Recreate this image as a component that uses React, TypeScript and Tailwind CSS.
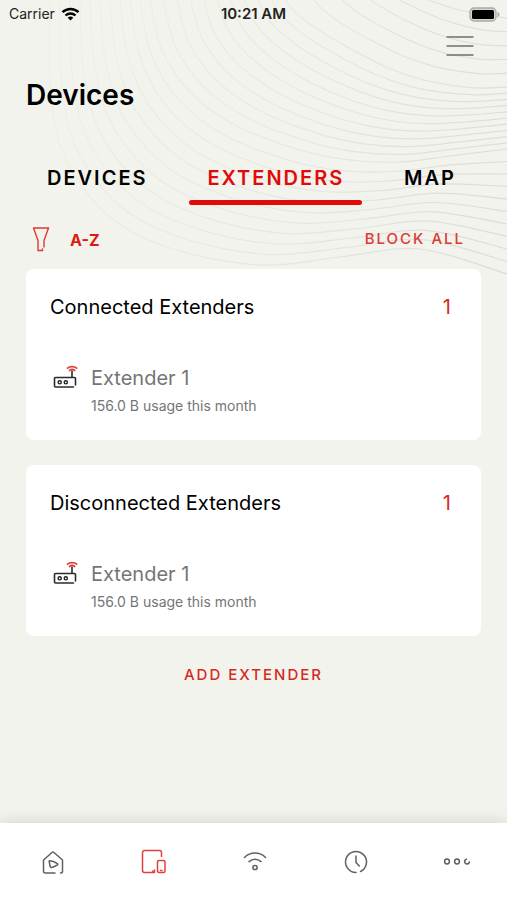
import React from "react";

type Point = [number, number];

const KEY_CURVES: { points: Point[]; steps: number }[] = [
  { points: [[428, 0], [440, 4], [452, 8], [463, 11], [474, 13], [485, 15], [491, 16], [499, 17], [507, 18]], steps: 5 },
  { points: [[285, 0], [296, 13], [320, 31], [353, 50], [386, 67], [420, 79], [450, 85], [478, 88], [507, 87]], steps: 10 },
  { points: [[150, 0], [162, 50], [190, 92], [235, 125], [300, 150], [350, 160], [400, 162], [450, 156], [507, 149]], steps: 10 },
  { points: [[50, 0], [50, 80], [62, 150], [105, 213], [170, 248], [260, 265], [340, 257], [420, 249], [507, 274]], steps: 0 },
];

function smoothPath(points: Point[]): string {
  let d = `M${points[0][0]} ${points[0][1]}`;
  for (let i = 0; i < points.length - 1; i++) {
    const p0 = points[Math.max(i - 1, 0)];
    const p1 = points[i];
    const p2 = points[i + 1];
    const p3 = points[Math.min(i + 2, points.length - 1)];
    d += ` C${p1[0] + (p2[0] - p0[0]) / 6} ${p1[1] + (p2[1] - p0[1]) / 6} ${p2[0] - (p3[0] - p1[0]) / 6} ${p2[1] - (p3[1] - p1[1]) / 6} ${p2[0]} ${p2[1]}`;
  }
  return d;
}

function contourPaths(): string[] {
  const paths: string[] = [];
  KEY_CURVES.forEach((curve, index) => {
    const next = KEY_CURVES[index + 1];
    if (!next) {
      paths.push(smoothPath(curve.points));
      return;
    }
    for (let s = 0; s < curve.steps; s++) {
      const t = s / curve.steps;
      paths.push(
        smoothPath(
          curve.points.map((p, i): Point => [
            p[0] + (next.points[i][0] - p[0]) * t,
            p[1] + (next.points[i][1] - p[1]) * t,
          ]),
        ),
      );
    }
  });
  return paths;
}

function Contours() {
  return (
    <svg className="pointer-events-none absolute inset-x-0 top-0 w-full" viewBox="0 0 507 290" fill="none" aria-hidden="true">
      <defs>
        <linearGradient id="contour" gradientUnits="userSpaceOnUse" x1="40" y1="0" x2="507" y2="160">
          <stop offset="0" stopColor="#eeefe9" />
          <stop offset="0.5" stopColor="#e8e9e3" />
          <stop offset="1" stopColor="#dcddd8" />
        </linearGradient>
      </defs>
      {contourPaths().map((d) => (
        <path key={d} d={d} stroke="url(#contour)" strokeWidth="1.2" />
      ))}
    </svg>
  );
}

function StatusBar() {
  return (
    <div className="grid h-7 grid-cols-3 items-center px-[9px] text-[14px] leading-5 text-[#222]">
      <div className="flex items-center gap-1.5">
        <span>Carrier</span>
        <svg width="19" height="14" viewBox="0 0 18 14" fill="none" stroke="#000" strokeWidth="2.4" aria-hidden="true">
          <path d="M1 5.2C5.5.9 12.500.9 17 5.200" />
          <path d="M4 8.500C6.800 5.800 11.200 5.800 14 8.500" />
          <path d="M6.200 10.700C7.800 9.200 10.200 9.200 11.800 10.700L9 13.500Z" fill="#000" stroke="none" />
        </svg>
      </div>
      <span className="text-center text-[15px] font-semibold">10:21 AM</span>
      <svg className="-mr-0.5 justify-self-end" width="31" height="15" viewBox="0 0 31 15" aria-hidden="true">
        <rect x="1" y="1" width="26" height="13" rx="4" fill="#d6d7d2" stroke="#aaaba7" strokeWidth="1.3" />
        <rect x="3" y="3" width="22" height="9" rx="1.500" fill="#000" />
        <path d="M28.500 5v5c1.400-.5 2-1.500 2-2.500s-.6-2-2-2.500Z" fill="#aaaba7" />
      </svg>
    </div>
  );
}

function ExtenderIcon() {
  return (
    <svg width="26" height="24" viewBox="0 0 26 24" fill="none" aria-hidden="true">
      <path d="M20.500 22H2.500a1 1 0 0 1-1-1v-7.500a1 1 0 0 1 1-1h19a1 1 0 0 1 1 1V20M19 12.500V6" stroke="#2b2b2b" strokeWidth="1.600" strokeLinecap="round" />
      <circle cx="6.700" cy="17.300" r="1.600" stroke="#222" strokeWidth="1.400" />
      <circle cx="12.800" cy="17.300" r="1.600" stroke="#222" strokeWidth="1.400" />
      <path d="M14.500 3.200C17 1 21.200 1 23.700 3.200M16.500 5.500C18 4.200 20.200 4.200 21.700 5.500" stroke="#e2403c" strokeWidth="1.700" strokeLinecap="round" />
    </svg>
  );
}

function ExtenderCard({ title, count }: { title: string; count: number }) {
  return (
    <section className="rounded-lg bg-white px-6 pt-6 pb-6">
      <div className="flex items-center justify-between pr-1.5">
        <h2 className="text-[20px] leading-7 text-black">{title}</h2>
        <span className="text-[20px] leading-7 text-[#d52b1e]">{count}</span>
      </div>
      <div className="mt-11 flex gap-3 pl-[3px]">
        <ExtenderIcon />
        <div className="-mt-px">
          <h3 className="text-[20px] leading-7 text-[#747676]">Extender 1</h3>
          <p className="mt-1 text-[14px] leading-5 text-[#747676]">156.0 B usage this month</p>
        </div>
      </div>
    </section>
  );
}

const TABS = ["DEVICES", "EXTENDERS", "MAP"];

const NAV_ITEMS: { label: string; active?: boolean; icon: React.ReactNode }[] = [
  {
    label: "Home",
    icon: (
      <>
        <path d="M16 25H6.500a2 2 0 0 1-2-2V12L13.300 4.300a1 1 0 0 1 1.400 0L23.500 12v11.500c0 .8-.7 1.500-2 1.500" />
        <path d="M10.500 12.800c2.700 0 5.300.9 7.900 2.800.5.4.5.9 0 1.300-1.900 1.400-3.800 2.200-5.900 2.600-.8.1-1.200-.2-1.300-1l-.9-4.500c-.1-.7-.3-1.200.2-1.200Z" />
      </>
    ),
  },
  {
    label: "Devices",
    active: true,
    icon: (
      <>
        <path d="M21.500 8.500V4.500a2 2 0 0 0-2-2h-15a2 2 0 0 0-2 2v18a2 2 0 0 0 2 2h10v-2.500M12.800 24.500v-1.500" />
        <rect x="17.500" y="12.500" width="7.500" height="12" rx="1.500" />
        <path d="M20.500 22.500h1.500" />
      </>
    ),
  },
  {
    label: "Network",
    icon: (
      <>
        <path d="M3.500 9.500C9.300 3.600 18.700 3.600 24.500 9.500M8 13.600c3.500-3.200 8.500-3.200 12 0" />
        <circle cx="14" cy="19.500" r="2.100" />
      </>
    ),
  },
  {
    label: "History",
    icon: (
      <>
        <path d="M14 24.500A10.500 10.500 0 1 1 18.500 23.500" />
        <path d="M14 8v6.500l3.300 3.500" />
      </>
    ),
  },
  {
    label: "More",
    icon: (
      <>
        <circle cx="4" cy="13.500" r="2.400" />
        <circle cx="14" cy="13.500" r="2.400" />
        <path d="M23.500 11.200a2.400 2.400 0 1 0 2.900 2.800" />
      </>
    ),
  },
];

export default function App() {
  return (
    <div className="relative flex min-h-screen flex-col bg-[#f2f3ed] font-['Inter','Liberation_Sans',sans-serif]">
      <Contours />
      <div className="relative flex flex-1 flex-col">
        <StatusBar />
        <header className="px-[26px]">
          <div className="flex justify-end pr-[3px]">
            <button type="button" aria-label="Menu" className="flex h-9 w-9 items-center justify-center">
              <svg width="28" height="20" viewBox="0 0 28 20" stroke="#6f706d" strokeWidth="1.500" aria-hidden="true">
                <path d="M.5 1h27M.5 10h27M.5 19h27" />
              </svg>
            </button>
          </div>
          <h1 className="mt-[11px] text-[28px] leading-10 font-semibold text-black">Devices</h1>
        </header>

        <div role="tablist" className="mt-[47px] flex justify-between pr-[33px] pl-[29px]">
          {TABS.map((tab) => {
            const active = tab === "EXTENDERS";
            return (
              <button
                key={tab}
                type="button"
                role="tab"
                aria-selected={active}
                className={
                  active
                    ? "flex flex-col text-[20px] leading-8 font-semibold tracking-widest text-[#e10a0a]"
                    : "flex flex-col text-[20px] leading-8 font-semibold tracking-widest text-black"
                }
              >
                <span className="px-[18px]">{tab}</span>
                <span className={active ? "mt-1.5 h-[5px] w-full rounded-sm bg-[#e10a0a]" : "mt-1.5 h-[5px] w-full"} />
              </button>
            );
          })}
        </div>

        <div className="flex h-16 items-center justify-between pr-[42px] pl-8">
          <div className="flex items-center gap-5 pt-1">
            <button type="button" aria-label="Filter">
              <svg width="18" height="26" viewBox="0 0 18 26" fill="none" stroke="#dc3b33" strokeWidth="1.400" strokeLinecap="round" strokeLinejoin="round" aria-hidden="true">
                <path d="M12 21V14.500L16.500 2H1.500L6 14.500V24.500H10.500V23" />
              </svg>
            </button>
            <button type="button" className="pt-0.5 text-[16px] leading-6 font-bold text-[#dc1a12]">
              A-Z
            </button>
          </div>
          <button type="button" className="pt-1 text-[15px] leading-6 font-medium tracking-[2px] text-[#dc3b33]">
            BLOCK ALL
          </button>
        </div>

        <main className="flex flex-1 flex-col gap-[25px] px-[26px]">
          <ExtenderCard title="Connected Extenders" count={1} />
          <ExtenderCard title="Disconnected Extenders" count={1} />
          <button type="button" className="self-center text-[15px] leading-7 font-medium tracking-[2px] text-[#d52b1e]">
            ADD EXTENDER
          </button>
        </main>
      </div>

      <nav className="relative grid h-[77px] grid-cols-5 bg-white pl-0.5 shadow-[0_-3px_12px_rgba(0,0,0,0.1)]">
        {NAV_ITEMS.map((item) => (
          <button
            key={item.label}
            type="button"
            aria-label={item.label}
            className={item.active ? "flex items-center justify-center text-[#e0403c]" : "flex items-center justify-center text-[#5f6061]"}
          >
            <svg width="28" height="28" viewBox="0 0 28 28" fill="none" stroke="currentColor" strokeWidth="1.500" strokeLinecap="round" strokeLinejoin="round" aria-hidden="true">
              {item.icon}
            </svg>
          </button>
        ))}
      </nav>
    </div>
  );
}
